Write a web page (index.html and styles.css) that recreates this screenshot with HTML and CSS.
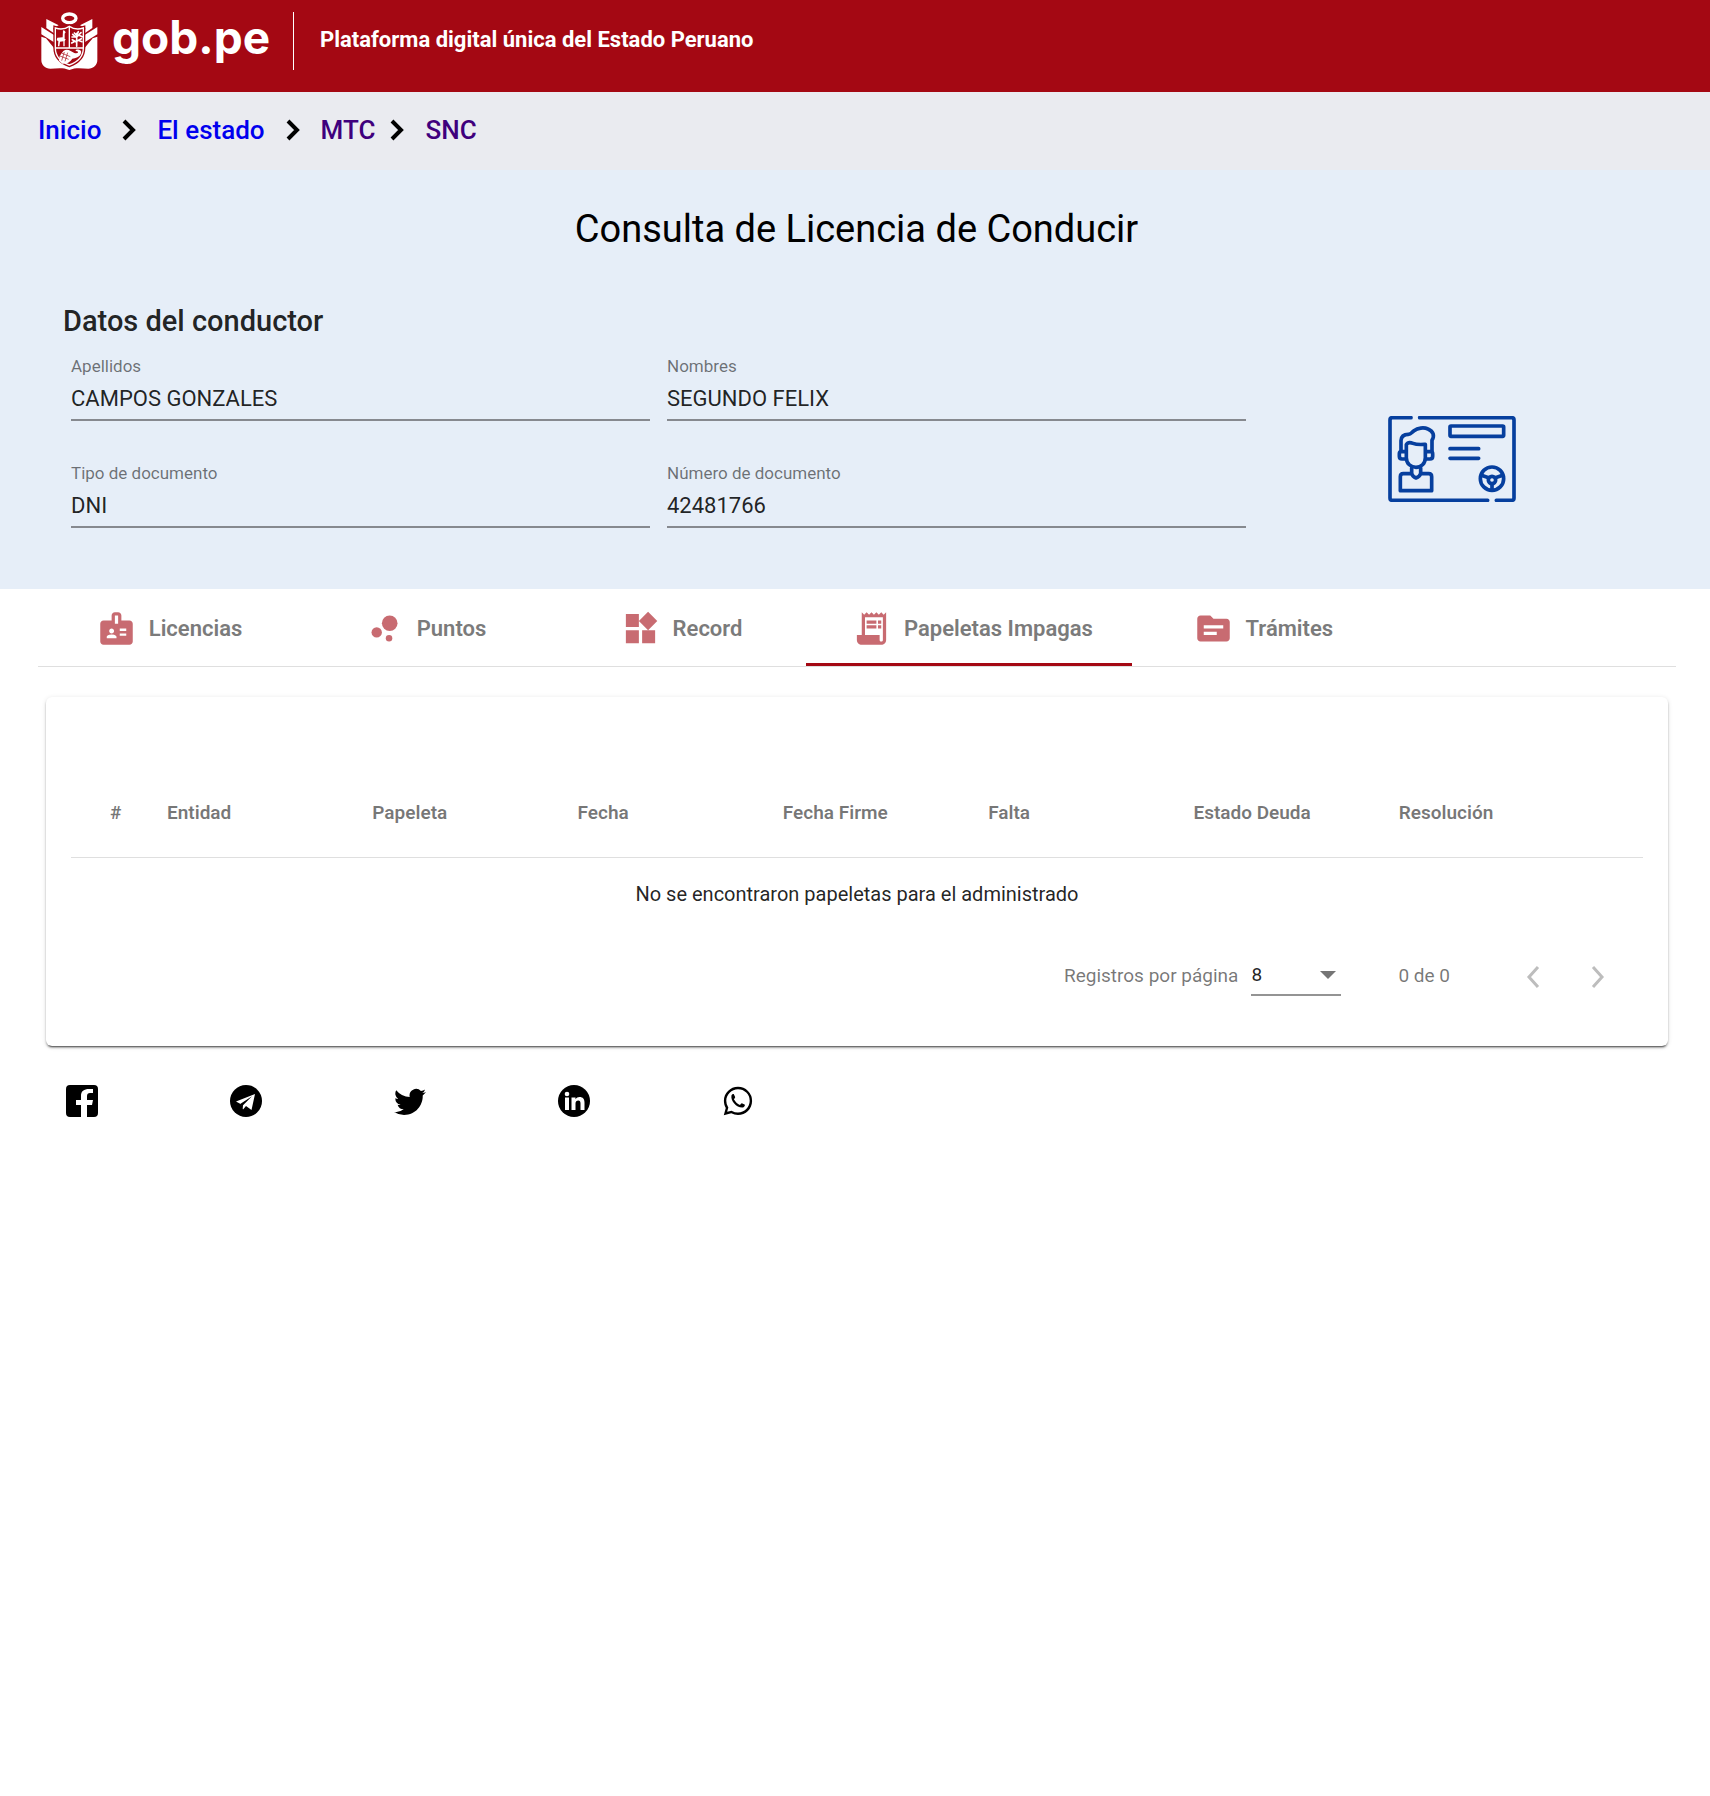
FILE: index.html
```html
<!DOCTYPE html>
<html lang="es">
<head>
<meta charset="utf-8">
<meta name="viewport" content="width=device-width, initial-scale=1">
<title>Consulta de Licencia de Conducir</title>
<link rel="stylesheet" href="styles.css">
</head>
<body>
<header class="topbar">
  <a class="brand" href="#">
    <svg class="crest" viewBox="63 36 171 174" aria-hidden="true">
      <ellipse cx="148" cy="55" rx="20" ry="13" fill="none" stroke="#fff" stroke-width="10"/>
      <path fill="#fff" d="M79 57l37 19-16 8 2 16-23-16zM217 57l-37 19 16 8-2 16 23-16z"/>
      <path fill="#fff" d="M64 81l38 24v22L64 103zM232 81l-38 24v22l38-24z"/>
      <path fill="#fff" d="M64 110l14 5 26 31c2 18 18 34 44 46 26-12 42-28 44-46l26-31 14-5v70c0 16-12 26-27 26-17 0-36-5-57 4-21-9-40-4-57-4-15 0-27-10-27-26z"/>
      <path fill="#a40813" stroke="#a40813" stroke-width="12" d="M106 84c18 6 30 3 42-5 12 8 24 11 42 5v60c0 26-17 42-42 51-25-9-42-25-42-51z"/>
      <path fill="#a40813" stroke="#fff" stroke-width="4" d="M106 84c18 6 30 3 42-5 12 8 24 11 42 5v60c0 26-17 42-42 51-25-9-42-25-42-51z"/>
      <path stroke="#fff" stroke-width="4" d="M148 80v63M105 144h86" fill="none"/>
      <path fill="#fff" d="M129 91l5 1 3 5-3 4v16h3l-3 7v15h-4v-15l-10 1-2 14h-4l1-16-5-2 2-8 16-1zM117 182l2-14 11-15c13-9 23 2 33 6 10 3 14-2 9-5l-6-1 3-4c10-1 17 4 14 11-3 11-17 16-26 16-7 12-20 16-30 15z"/>
      <path stroke="#fff" stroke-width="5" stroke-linecap="round" fill="none" d="M170 139v-39M170 127l-13-8M170 124l14-8M170 113l-12-10M170 111l13-13M163 99l7 7 5-11M156 111h8M177 106l10 4M178 122l8 3M162 125l-7 4"/>
      <path stroke="#a40813" stroke-width="2" fill="none" d="M120 168l26 10M126 160l25 10M133 156l-8 26M143 158l-8 26"/>
    </svg>
    <span class="wordmark">gob.pe</span>
  </a>
  <p class="tagline">Plataforma digital única del Estado Peruano</p>
</header>

<nav class="crumbs" aria-label="Ruta">
  <a href="#">Inicio</a>
  <svg class="crumb-sep" viewBox="0 0 14 22"><path d="M2 2l9 9-9 9"/></svg>
  <a href="#">El estado</a>
  <svg class="crumb-sep" viewBox="0 0 14 22"><path d="M2 2l9 9-9 9"/></svg>
  <a class="seen" href="#">MTC</a>
  <svg class="crumb-sep tight" viewBox="0 0 14 22"><path d="M2 2l9 9-9 9"/></svg>
  <a class="seen" href="#">SNC</a>
</nav>

<section class="driver">
  <h1>Consulta de Licencia de Conducir</h1>
  <h2>Datos del conductor</h2>
  <div class="driver-grid">
    <div class="field"><label for="ap">Apellidos</label><input id="ap" type="text" value="CAMPOS GONZALES" readonly></div>
    <div class="field"><label for="no">Nombres</label><input id="no" type="text" value="SEGUNDO FELIX" readonly></div>
    <div class="license">
      <svg viewBox="84 78 384 258" width="128" height="86" aria-hidden="true">
        <g fill="none" stroke="#063f9e" stroke-width="11" stroke-linecap="round" stroke-linejoin="round">
          <path d="M153 83H97q-7 0-7 7v234q0 7 7 7h286M179 83h276q7 0 7 7v234q0 7-7 7h-46"/>
          <rect x="270" y="108" width="161" height="31" rx="3"/>
          <path d="M270 176h86M270 205h86"/>
          <circle cx="396" cy="266" r="35"/><circle cx="396" cy="270" r="11"/>
          <path d="M364 256l22 7M428 256l-22 7M396 283v17"/>
          <path d="M123 182v-30q1-19 22-19c8 0 9-5 17-11 11-8 29-11 42-5 17 7 20 21 12 34v31"/>
          <path d="M139 164c5-9 13-7 20-4 12 5 22 4 37 3v40c0 18-13 29-28 29s-29-11-29-29z"/>
          <path d="M138 185h-14q-6 0-6 6v8q0 8 8 8h12M198 185h14q6 0 6 6v8q0 8-8 8h-12"/>
          <path d="M155 234v17h-25q-9 0-9 9v42h94v-42q0-9-9-9h-24v-17M155 251q3 9 13 13 11-4 14-13"/>
        </g>
      </svg>
    </div>
    <div class="field"><label for="td">Tipo de documento</label><input id="td" type="text" value="DNI" readonly></div>
    <div class="field"><label for="nd">Número de documento</label><input id="nd" type="text" value="42481766" readonly></div>
  </div>
</section>

<main>
  <div class="tabs" role="tablist">
    <button class="tab" type="button" role="tab" aria-selected="false">
      <svg viewBox="0 0 24 24"><path d="M20 7h-5V4c0-1.100-.9-2-2-2h-2c-1.100 0-2 .9-2 2v3H4c-1.100 0-2 .9-2 2v11c0 1.100.9 2 2 2h16c1.100 0 2-.9 2-2V9c0-1.100-.9-2-2-2zM9 12c.83 0 1.500.67 1.500 1.500S9.830 15 9 15s-1.500-.67-1.500-1.500S8.170 12 9 12zm3 6H6v-.75c0-1 2-1.500 3-1.500s3 .5 3 1.500V18zm1-9h-2V4h2v5zm5 7.500h-4V15h4v1.500zm0-3h-4V12h4v1.500z"/></svg>Licencias</button>
    <button class="tab" type="button" role="tab" aria-selected="false">
      <svg viewBox="0 0 24 24"><circle cx="7.200" cy="14.400" r="3.200"/><circle cx="14.800" cy="18" r="2"/><circle cx="15.200" cy="8.800" r="4.800"/></svg>Puntos</button>
    <button class="tab" type="button" role="tab" aria-selected="false">
      <svg viewBox="0 0 24 24"><path d="M13 13v8h8v-8h-8zM3 21h8v-8H3v8zM3 3v8h8V3H3zm13.660-1.310L11 7.340 16.660 13l5.660-5.660-5.660-5.650z"/></svg>Record</button>
    <button class="tab active" type="button" role="tab" aria-selected="true">
      <svg viewBox="0 0 24 24"><path d="M19.500 3.500L18 2l-1.500 1.500L15 2l-1.500 1.500L12 2l-1.500 1.500L9 2 7.500 3.500 6 2v14H3v3c0 1.660 1.340 3 3 3h12c1.660 0 3-1.340 3-3V2l-1.500 1.500zM19 19c0 .55-.45 1-1 1s-1-.45-1-1v-3H8V5h11v14zM9 7h6v2H9zM16 7h2v2h-2zM9 10h6v2H9zM16 10h2v2h-2z"/></svg>Papeletas Impagas</button>
    <button class="tab" type="button" role="tab" aria-selected="false">
      <svg viewBox="0 0 24 24"><path d="M20 6h-8l-2-2H4c-1.100 0-1.990.9-1.990 2L2 18c0 1.100.9 2 2 2h16c1.100 0 2-.9 2-2V8c0-1.100-.9-2-2-2zm-6 10H6v-2h8v2zm4-4H6v-2h12v2z"/></svg>Trámites</button>
  </div>

  <section class="card">
    <table>
      <thead>
        <tr><th>#</th><th>Entidad</th><th>Papeleta</th><th>Fecha</th><th>Fecha Firme</th><th>Falta</th><th>Estado Deuda</th><th>Resolución</th></tr>
      </thead>
      <tbody>
        <tr><td class="empty" colspan="8">No se encontraron papeletas para el administrado</td></tr>
      </tbody>
    </table>
    <div class="pager">
      <label for="size">Registros por página</label>
      <div class="select">
        <select id="size"><option>8</option></select>
        <svg viewBox="0 0 16 8"><path d="M0 0h16L8 8z"/></svg>
      </div>
      <span class="range">0 de 0</span>
      <div class="steps">
        <button type="button" aria-label="Anterior" disabled><svg viewBox="0 0 14 22"><path d="M12 1L3 11l9 10"/></svg></button>
        <button type="button" aria-label="Siguiente" disabled><svg viewBox="0 0 14 22"><path d="M2 1l9 10-9 10"/></svg></button>
      </div>
    </div>
  </section>
</main>

<footer class="social">
  <a href="#" aria-label="Facebook"><svg viewBox="0 0 32 32"><path d="M4 0h24a4 4 0 0 1 4 4v24a4 4 0 0 1-4 4h-7V20h5l1-5h-6v-4c0-2 1-3 3-3h3V4h-4c-5 0-8 2-8 7v4h-5v5h5v12H4a4 4 0 0 1-4-4V4a4 4 0 0 1 4-4z"/></svg></a>
  <a href="#" aria-label="Telegram"><svg viewBox="0 0 32 32"><circle cx="16" cy="16" r="16"/><path fill="#fff" d="M6 16.500L25 9l-3.500 16-5.500-4-3 3.500-1.500-5z"/><path d="M10.500 18.800L22 11.200l-9 9-.3 3.600z"/></svg></a>
  <a href="#" aria-label="Twitter"><svg viewBox="0 0 16 16"><path d="M5.026 15c6.038 0 9.341-5.003 9.341-9.334 0-.14 0-.282-.006-.422A6.685 6.685 0 0 0 16 3.542a6.658 6.658 0 0 1-1.889.518 3.301 3.301 0 0 0 1.447-1.817 6.533 6.533 0 0 1-2.087.793A3.286 3.286 0 0 0 7.875 6.030a9.325 9.325 0 0 1-6.767-3.429 3.289 3.289 0 0 0 1.018 4.382A3.323 3.323 0 0 1 .64 6.575v.045a3.288 3.288 0 0 0 2.632 3.218 3.203 3.203 0 0 1-.865.115 3.230 3.230 0 0 1-.614-.057 3.283 3.283 0 0 0 3.067 2.277A6.588 6.588 0 0 1 .78 13.580a6.320 6.320 0 0 1-.78-.045A9.344 9.344 0 0 0 5.026 15z"/></svg></a>
  <a href="#" aria-label="LinkedIn"><svg viewBox="0 0 32 32"><circle cx="16" cy="16" r="16"/><g fill="#fff"><circle cx="9" cy="9" r="2.300"/><path d="M7 12.500h4V25H7zM13.500 12.500h4v1.800c1-1.500 2.300-2.200 4-2.200 3.500 0 5 2.200 5 5.500V25h-4v-6.500c0-2-.6-3-2.200-3-1.700 0-2.800 1.200-2.800 3V25h-4z"/></g></svg></a>
  <a href="#" aria-label="WhatsApp"><svg viewBox="-1 -1 18 18"><path d="M13.601 2.326A7.854 7.854 0 0 0 7.994 0C3.627 0 .068 3.558.064 7.926c0 1.399.366 2.760 1.057 3.965L0 16l4.204-1.102a7.933 7.933 0 0 0 3.790.965h.004c4.368 0 7.926-3.558 7.930-7.930A7.898 7.898 0 0 0 13.600 2.326zM7.994 14.521a6.573 6.573 0 0 1-3.356-.92l-.24-.144-2.494.654.666-2.433-.156-.251a6.560 6.560 0 0 1-1.007-3.505c0-3.626 2.957-6.584 6.591-6.584a6.560 6.560 0 0 1 4.660 1.931 6.557 6.557 0 0 1 1.928 4.660c-.004 3.639-2.961 6.592-6.592 6.592z"/><path d="M4.300 5c.1-.6.800-1 1.300-.9l.8 1.700c.1.400-.5.900-.7 1.200.8 1.500 1.900 2.600 3.400 3.200.4-.3.700-.9 1.100-.9l1.700.8c0 .8-.5 1.400-1.300 1.500-3.400.2-6.800-3.600-6.300-6.600z"/></svg></a>
</footer>
</body>
</html>
```
FILE: styles.css
```css
* {
  box-sizing: border-box;
}

body {
  margin: 0;
  background: #fff;
  color: rgba(0, 0, 0, 0.87);
  font-family: Roboto, "Liberation Sans", sans-serif;
  font-size: 20px;
}

svg {
  display: block;
}

a {
  text-decoration: none;
}

button {
  border: 0;
  padding: 0;
  background: none;
  font: inherit;
}

/* Header */
.topbar {
  display: flex;
  align-items: flex-start;
  height: 92px;
  padding: 12px 38px 0 41px;
  background: #a40813;
  color: #fff;
}

.brand {
  display: flex;
  gap: 14px;
  width: 253px;
  height: 58px;
  border-right: 1px solid #fff;
  color: #fff;
}

.crest {
  width: 57px;
  height: 58px;
}

.wordmark {
  font: 700 46px/50px Inter, "Open Sans", sans-serif;
}

.tagline {
  margin: 0;
  padding-left: 26px;
  font-size: 22px;
  font-weight: 700;
  line-height: 56px;
}

/* Breadcrumb */
.crumbs {
  display: flex;
  align-items: center;
  gap: 21px;
  height: 78px;
  padding: 0 38px 2px;
  background: #eaebf0;
  font-size: 26px;
  font-weight: 500;
}

.crumbs a {
  color: #00e;
}

.crumbs .seen {
  color: #3f007d;
}

.crumb-sep {
  width: 14px;
  height: 22px;
  fill: none;
  stroke: #000;
  stroke-width: 4;
}

.crumb-sep.tight {
  margin-left: -6px;
}

/* Driver data */
.driver {
  padding: 35px 68px 61px 71px;
  background: #e6eef8;
}

.driver h1 {
  margin: 0;
  color: #000;
  font-size: 38px;
  font-weight: 400;
  line-height: 48px;
  text-align: center;
}

.driver h2 {
  margin: 51px 0 16px -8px;
  font-size: 29px;
  font-weight: 500;
  line-height: 34px;
}

.driver-grid {
  display: grid;
  grid-template-columns: 579fr 579fr 379fr;
  gap: 40px 17px;
}

.field {
  display: flex;
  flex-direction: column;
  border-bottom: 2px solid #86898f;
}

.field label {
  color: rgba(0, 0, 0, 0.54);
  font-size: 17px;
  line-height: 24px;
}

.field input {
  width: 100%;
  height: 41px;
  border: 0;
  padding: 0;
  background: none;
  color: rgba(0, 0, 0, 0.87);
  font: 400 22px/26px Roboto, sans-serif;
  outline: 0;
}

.license {
  display: flex;
  grid-row: 1 / 3;
  grid-column: 3;
  align-items: center;
  justify-content: center;
  padding: 36px 2px 0 0;
}

/* Tabs */
main {
  padding: 0 34px 0 38px;
}

.tabs {
  display: flex;
  border-bottom: 1px solid #dfdfdf;
}

.tab {
  display: flex;
  align-items: center;
  justify-content: center;
  gap: 13px;
  min-width: 256px;
  height: 77px;
  padding: 4px 39px 0;
  border-bottom: 3px solid transparent;
  color: #7b7b7b;
  font-size: 22px;
  font-weight: 600;
}

.tab.active {
  border-bottom-color: #a40813;
}

.tab svg {
  width: 39px;
  height: 39px;
  margin-left: 7px;
  fill: #c86b71;
}

/* Results */
.card {
  margin: 30px 8px 0;
  padding: 71px 25px 36px;
  border-radius: 6px;
  box-shadow: 0 3px 1px -2px rgba(0, 0, 0, 0.4), 0 2px 2px rgba(0, 0, 0, 0.28), 0 1px 5px rgba(0, 0, 0, 0.12);
}

table,
thead,
tbody {
  display: block;
}

tr {
  display: grid;
  grid-template-columns: 57px repeat(7, 1fr);
  padding: 0 39px;
}

thead tr {
  border-bottom: 1px solid #dfdfdf;
}

th {
  padding: 0;
  color: rgba(0, 0, 0, 0.54);
  font-size: 19px;
  font-weight: 600;
  line-height: 89px;
  text-align: left;
}

.empty {
  grid-column: 1 / -1;
  padding: 0;
  line-height: 72px;
  text-align: center;
}

.pager {
  display: flex;
  align-items: center;
  justify-content: flex-end;
  height: 70px;
  margin-top: 10px;
  padding-right: 38px;
  color: rgba(0, 0, 0, 0.54);
  font-size: 19px;
}

.select {
  display: flex;
  align-items: center;
  width: 90px;
  margin: 2px 57px 0 13px;
  border-bottom: 2px solid #949494;
}

.select select {
  flex: 1;
  min-width: 0;
  height: 38px;
  border: 0;
  padding: 0;
  background: none;
  color: rgba(0, 0, 0, 0.87);
  appearance: none;
  font: 400 19px/22px Roboto, sans-serif;
}

.select svg {
  width: 16px;
  height: 8px;
  margin-right: 5px;
  fill: #757575;
}

.steps {
  display: flex;
  gap: 51px;
  margin-left: 76px;
  padding-top: 4px;
}

.steps svg {
  width: 14px;
  height: 22px;
  fill: none;
  stroke: #bdbdbd;
  stroke-width: 3;
}

/* Social links */
.social {
  display: flex;
  gap: 132px;
  padding: 39px 66px;
}

.social svg {
  width: 32px;
  height: 32px;
}
```
